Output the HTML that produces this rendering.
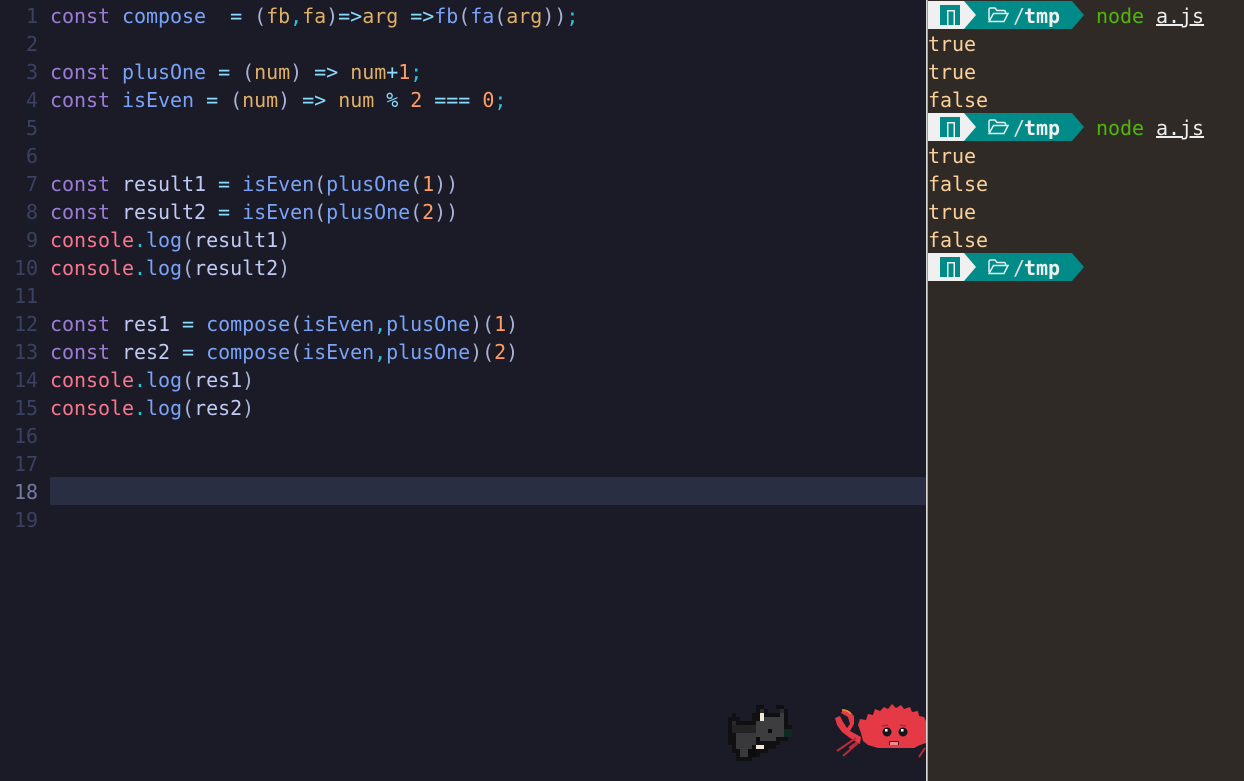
<!DOCTYPE html>
<html><head><meta charset="utf-8"><style>
html,body{margin:0;padding:0;width:1244px;height:781px;overflow:hidden;background:#1a1b26}
#ed,#tm{position:absolute;top:0;height:781px;overflow:hidden}
#ed{left:0;width:926px;background:#1a1b26}
#tm{left:928px;width:316px;background:#2f2a25}
#l1{position:absolute;left:926px;top:0;width:1px;height:781px;background:#d8d8d8}
#l2{position:absolute;left:927px;top:0;width:1px;height:781px;background:#3fe03f}
.r,.n,.t{position:absolute;margin-top:1px;font:20px/28px "DejaVu Sans Mono","Liberation Mono",monospace;letter-spacing:-.04px;white-space:pre;height:28px}
.r{left:50px;color:#c0caf5}
.n{left:0;width:38px;text-align:right;color:#3b4261}
.k{color:#9d7cd8}.f{color:#7aa2f7}.o{color:#89ddff}.p{color:#a9b1d6}.a{color:#e0af68}.d{color:#ff9e64}.c{color:#f7768e}.e{color:#2ac3de}
.t{left:0;color:#fcd099}
#cur{position:absolute;left:50px;top:477px;width:876px;height:28px;background:#292e42}
.g{color:#4eb80a}.u{color:#eee;text-decoration:underline}
.b{font-weight:bold;color:#eee}
svg{position:absolute}
</style></head><body>
<div id="ed">
<div id="cur"></div>
<div class="n" style="top:1px">1</div><div class="r" style="top:1px"><span class="k">const</span> <span class="f">compose</span>  <span class="o">=</span> <span class="p">(</span><span class="a">fb</span><span class="e">,</span><span class="a">fa</span><span class="p">)</span><span class="o">=&gt;</span><span class="a">arg</span> <span class="o">=&gt;</span><span class="f">fb</span><span class="p">(</span><span class="f">fa</span><span class="p">(</span><span class="a">arg</span><span class="p">))</span><span class="e">;</span></div>
<div class="n" style="top:29px">2</div>
<div class="n" style="top:57px">3</div><div class="r" style="top:57px"><span class="k">const</span> <span class="f">plusOne</span> <span class="o">=</span> <span class="p">(</span><span class="a">num</span><span class="p">)</span> <span class="o">=&gt;</span> <span class="a">num</span><span class="o">+</span><span class="d">1</span><span class="e">;</span></div>
<div class="n" style="top:85px">4</div><div class="r" style="top:85px"><span class="k">const</span> <span class="f">isEven</span> <span class="o">=</span> <span class="p">(</span><span class="a">num</span><span class="p">)</span> <span class="o">=&gt;</span> <span class="a">num</span> <span class="o">%</span> <span class="d">2</span> <span class="o">===</span> <span class="d">0</span><span class="e">;</span></div>
<div class="n" style="top:113px">5</div>
<div class="n" style="top:141px">6</div>
<div class="n" style="top:169px">7</div><div class="r" style="top:169px"><span class="k">const</span> result1 <span class="o">=</span> <span class="f">isEven</span><span class="p">(</span><span class="f">plusOne</span><span class="p">(</span><span class="d">1</span><span class="p">))</span></div>
<div class="n" style="top:197px">8</div><div class="r" style="top:197px"><span class="k">const</span> result2 <span class="o">=</span> <span class="f">isEven</span><span class="p">(</span><span class="f">plusOne</span><span class="p">(</span><span class="d">2</span><span class="p">))</span></div>
<div class="n" style="top:225px">9</div><div class="r" style="top:225px"><span class="c">console</span><span class="e">.</span><span class="f">log</span><span class="p">(</span>result1<span class="p">)</span></div>
<div class="n" style="top:253px">10</div><div class="r" style="top:253px"><span class="c">console</span><span class="e">.</span><span class="f">log</span><span class="p">(</span>result2<span class="p">)</span></div>
<div class="n" style="top:281px">11</div>
<div class="n" style="top:309px">12</div><div class="r" style="top:309px"><span class="k">const</span> res1 <span class="o">=</span> <span class="f">compose</span><span class="p">(</span><span class="f">isEven</span><span class="e">,</span><span class="f">plusOne</span><span class="p">)(</span><span class="d">1</span><span class="p">)</span></div>
<div class="n" style="top:337px">13</div><div class="r" style="top:337px"><span class="k">const</span> res2 <span class="o">=</span> <span class="f">compose</span><span class="p">(</span><span class="f">isEven</span><span class="e">,</span><span class="f">plusOne</span><span class="p">)(</span><span class="d">2</span><span class="p">)</span></div>
<div class="n" style="top:365px">14</div><div class="r" style="top:365px"><span class="c">console</span><span class="e">.</span><span class="f">log</span><span class="p">(</span>res1<span class="p">)</span></div>
<div class="n" style="top:393px">15</div><div class="r" style="top:393px"><span class="c">console</span><span class="e">.</span><span class="f">log</span><span class="p">(</span>res2<span class="p">)</span></div>
<div class="n" style="top:421px">16</div>
<div class="n" style="top:449px">17</div>
<div class="n" style="top:477px;color:#737aa2">18</div>
<div class="n" style="top:505px">19</div>

<!-- dog -->
<svg style="left:720px;top:695px" width="80" height="72" viewBox="0 0 240 216" shape-rendering="crispEdges">
<path fill="#101013" d="M108 30h24v12h12v12h36V42h-12V30h24v12h12v48h12v36h-12v12h-24v12h-12v12h-24v12h-24v12h-24v12H48v-24H36v-24H24V66h12V54h12v12h12v12h36V54h12z"/>
<path fill="#3d3d3f" d="M108 78h12V66h12v0h48v-12h12v36h0v36h-24v12h-48v-12h-12z"/>
<path fill="#232325" d="M36 90h72v24H36z"/>
<path fill="#39393b" d="M48 114h60v36H48zM48 150h48v12H48zM60 162h24v24H60z"/>
<path fill="#2a2a2c" d="M36 78h12v12H36zM120 42h12v12h-12zM180 42h12v12h-12z"/>
<path fill="#0d2a20" d="M192 102h24v24h-24z"/>
<path fill="#f2e6d4" d="M120 54h12v24h-12zM108 150h24v12h-24z"/>
<path fill="#0b0b0e" d="M144 102h12v12h-12zM108 126h12v12h-12zM84 162h24v24H84z"/>
</svg>

<!-- crab -->
<svg style="left:830px;top:695px" width="96" height="65" viewBox="0 0 96 65">
<path fill="#e63946" d="M30 24L36 25 38 19 43 20 45 14 50 16 54 12 58 14 62 9 66 13 71 10 74 14 80 12 82 17 88 16 89 21 94 22 96 26V48L90 50 84 53H48L38 50 33 46 31 38 28 30Z"/>
<path fill="#e63946" d="M5 23L10 21 13 27 17 33 20 29 18 22 11 18 13 15 19 16 24 21 24 29 20 36 31 42 30 49 20 43 12 37 7 30Z"/>
<path fill="none" stroke="#f08a3a" stroke-width="1.8" d="M12 15Q18 15 21 19"/>
<path fill="none" stroke="#b92c3a" stroke-width="2" d="M7 56L26 43M13 61L28 48M19 53L27 47M89 62L95 53"/>
<ellipse cx="57" cy="37" rx="4.5" ry="4.5" fill="#16151c"/><ellipse cx="73" cy="37" rx="4.5" ry="4.5" fill="#16151c"/>
<rect x="55" y="34" width="2.5" height="2.5" fill="#fff"/><rect x="71" y="34" width="2.5" height="2.5" fill="#fff"/>
<path fill="none" stroke="#a82a38" stroke-width="1.5" d="M52 31l6-1M70 30l6 1"/>
<path fill="#5a1a24" d="M59 46h10v4H59z"/><path fill="#ee8a8a" d="M60 47h8v3h-8z"/>
</svg>
</div>
<div id="l1"></div><div id="l2"></div>

<div id="tm">
<svg style="left:0;top:1px" width="170" height="28"><use href="#seg"/></svg>
<svg style="left:0;top:113px" width="170" height="28"><use href="#seg"/></svg>
<svg style="left:0;top:253px" width="170" height="28"><use href="#seg"/></svg>

<div class="t b" style="left:85px;top:1px;color:#ddd;font-weight:normal">/</div><div class="t b" style="left:96px;top:1px">tmp</div>
<div class="t" style="left:168px;top:1px"><span class="g">node</span> <span class="u">a.js</span></div>
<div class="t" style="top:29px">true</div>
<div class="t" style="top:57px">true</div>
<div class="t" style="top:85px">false</div>
<div class="t b" style="left:85px;top:113px;color:#ddd;font-weight:normal">/</div><div class="t b" style="left:96px;top:113px">tmp</div>
<div class="t" style="left:168px;top:113px"><span class="g">node</span> <span class="u">a.js</span></div>
<div class="t" style="top:141px">true</div>
<div class="t" style="top:169px">false</div>
<div class="t" style="top:197px">true</div>
<div class="t" style="top:225px">false</div>
<div class="t b" style="left:85px;top:253px;color:#ddd;font-weight:normal">/</div><div class="t b" style="left:96px;top:253px">tmp</div>
</div>
<svg width="0" height="0" style="left:0;top:0"><defs><g id="seg">
<path fill="#008b88" d="M36 0H144L156 14 144 28H36z"/>
<path fill="#f0f0f0" d="M0 0H36L48 14 36 28H0z"/>
<path fill="#008b88" d="M12 4H32V24H12z"/>
<path fill="#f0f0f0" d="M19 9H27V24H25.5V10.5H20.5V24H19z"/>
<path fill="none" stroke="#e4eeed" stroke-width="1.5" d="M61 19V8.5a1.5 1.5 0 0 1 1.5-1.5H67l2 2.5h7a1.5 1.5 0 0 1 1.5 1.5v1.5M61 20.5h15l4-8H65.5L61 20.5z"/>
</g></defs></svg>
</body></html>
